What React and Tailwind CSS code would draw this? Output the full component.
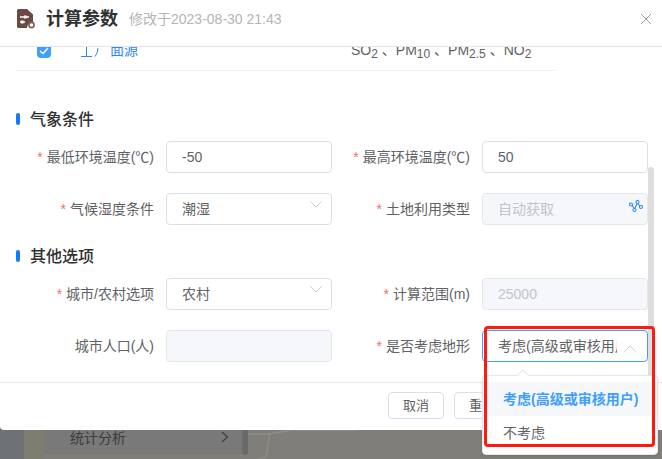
import React from "react";

function Label({ children, required }) {
  return (
    <label className="flex-1 pr-3 text-right text-sm leading-8 text-[#606266] whitespace-nowrap">
      {required && <span className="mr-1 text-[#f56c6c]">*</span>}
      {children}
    </label>
  );
}

function Chevron({ up }) {
  return (
    <svg width="12" height="7" viewBox="0 0 12 7" fill="none" stroke="#c8ccd4" strokeWidth="1">
      <path d={up ? "M0.5 6.5 L6 1 L11.5 6.5" : "M0.5 0.5 L6 6 L11.5 0.5"} />
    </svg>
  );
}

function Control({ value, disabled, select, children }) {
  return (
    <div
      className={
        "relative h-8 w-[166px] shrink-0 rounded border px-[15px] text-sm leading-[30px] " +
        (disabled
          ? "border-[#e4e7ed] bg-[#f5f7fa] text-[#c0c4cc]"
          : "border-[#dcdfe6] bg-white text-[#606266]")
      }
    >
      {value}
      {select && (
        <span className="absolute right-[9px] top-[7px] flex">
          <Chevron />
        </span>
      )}
      {children}
    </div>
  );
}

function Section({ children, className }) {
  return (
    <div className={"flex h-6 items-center pl-4 " + className}>
      <span className="h-3 w-1 rounded-sm bg-[#1677ff]" />
      <span className="ml-[10px] pt-[2px] text-base font-medium leading-6 text-[#303133]">{children}</span>
    </div>
  );
}

function Row({ left, right, className = "" }) {
  return (
    <div className={"flex h-8 " + className}>
      <div className="flex w-[332px]">{left}</div>
      <div className="flex w-[316px]">{right}</div>
    </div>
  );
}

function Formula() {
  const Sub = ({ children }) => <sub className="text-[12px]">{children}</sub>;
  return (
    <span className="whitespace-pre text-sm leading-5 text-[#606266]">
      SO<Sub>2</Sub> 、PM<Sub>10</Sub> 、PM<Sub>2.5</Sub> 、NO<Sub>2</Sub>
    </span>
  );
}

function Button({ children, className = "" }) {
  return (
    <button className={"h-[27px] rounded border border-[#dcdfe6] bg-white text-[13px] text-[#606266] " + className}>
      {children}
    </button>
  );
}

export default function App() {
  return (
    <div
      className="relative flex h-[459px] w-[662px] flex-col overflow-hidden bg-[#7f7e78]"
      style={{ fontFamily: '"Liberation Sans","Noto Sans CJK SC",sans-serif' }}
    >
      <div className="absolute inset-x-0 bottom-0 flex h-[40px]">
        <div className="w-6 bg-[#6e7274]" />
        <div className="w-5 bg-[#7f7d72]" />
        <div className="relative h-[35px] w-[198px] bg-[#797979] pl-[26px] pt-[7px]">
          <span className="text-sm leading-5 text-[#3c3c3c]">统计分析</span>
          <svg className="absolute left-[177px] top-[12px]" width="8" height="12" viewBox="0 0 8 12" fill="none" stroke="#3f3f3f" strokeWidth="1.2">
            <path d="M1 1 L6.5 6 L1 11" />
          </svg>
        </div>
        <div className="h-[36px] w-[6px] rounded-b bg-[#6a6a6a]" />
        <svg className="flex-1" viewBox="0 0 414 40" height="40" fill="none" stroke="#8f8d85" strokeWidth="1.5">
          <path d="M0 15 H20 L45 11 H110 M22 14 L18 38 L10 40" />
        </svg>
      </div>

      <div className="relative flex h-[430px] shrink-0 flex-col rounded-bl bg-white">
        <header className="flex h-[47px] shrink-0 items-center border-b border-[#e4e4e4] pb-[8px]">
          <svg className="ml-[17px]" width="19" height="20" viewBox="0 0 19 20">
            <path d="M1.5 0 H10 L16 5.5 V14 A5 5 0 0 0 10 19 H1.5 A1.5 1.5 0 0 1 0 17.5 V1.5 A1.5 1.5 0 0 1 1.5 0 Z" fill="#6b4a44" />
            <path d="M3 8 H12 M3 13 H8" stroke="#fff" strokeWidth="1.4" />
            <rect x="7" y="6.5" width="2.5" height="3" fill="#fff" />
            <rect x="4" y="11.5" width="2.5" height="3" fill="#fff" />
            <circle cx="14.5" cy="16" r="2.6" fill="none" stroke="#7b5f5a" strokeWidth="1.6" />
          </svg>
          <h1 className="ml-[10px] text-lg font-bold text-[#303133]">计算参数</h1>
          <span className="ml-[11px] text-sm text-[#b4b4b4]">修改于2023-08-30 21:43</span>
          <svg className="ml-auto mr-[11px]" width="10" height="10" viewBox="0 0 10 10" stroke="#909399" strokeWidth="0.9">
            <path d="M0 0 L10 10 M10 0 L0 10" />
          </svg>
        </header>

        <main className="flex-1 overflow-hidden">
          <div className="ml-4 flex h-6 w-[540px] items-start border-b border-[#f0f0f0]">
            <span className="ml-[21px] -mt-[3px] flex h-[14px] w-[14px] items-center justify-center rounded-sm bg-[#409eff]">
              <svg width="10" height="8" viewBox="0 0 10 8" fill="none" stroke="#fff" strokeWidth="1.3">
                <path d="M1 4 L4 6.5 L9 1" />
              </svg>
            </span>
            <svg className="ml-[30px] -mt-[7px]" width="19" height="17" viewBox="0 0 19 17" fill="none" stroke="#2f86f6" strokeWidth="1">
              <path d="M0 16.5 H11 M5.5 0 V16.5 M17 8 Q16.5 14 14 16.5" />
            </svg>
            <span className="ml-[10px] -mt-[7px] text-sm leading-5 text-[#2f86f6]">面源</span>
            <span className="ml-[213px] -mt-[7px] flex">
              <Formula />
            </span>
          </div>

          <Section className="mt-9">气象条件</Section>
          <Row
            className="mt-[10px]"
            left={<><Label required>最低环境温度(℃)</Label><Control value="-50" /></>}
            right={<><Label required>最高环境温度(℃)</Label><Control value="50" /></>}
          />
          <Row
            className="mt-5"
            left={<><Label required>气候湿度条件</Label><Control value="潮湿" select /></>}
            right={
              <>
                <Label required>土地利用类型</Label>
                <Control value="自动获取" disabled>
                  <svg className="absolute right-[4px] top-[6px]" width="14" height="13" viewBox="0 0 14 13" fill="none" stroke="#2f86f6" strokeWidth="1.1">
                    <path d="M2.5 4.5 L5.5 9 L8.5 3 L11.5 7" />
                    <circle cx="2" cy="4.5" r="1.5" fill="#fff" />
                    <circle cx="5.5" cy="10" r="1.5" fill="#fff" />
                    <circle cx="8.5" cy="2" r="1.5" fill="#fff" />
                    <circle cx="12" cy="7" r="1.5" fill="#fff" />
                  </svg>
                </Control>
              </>
            }
          />
          <Section className="mt-[19px]">其他选项</Section>
          <Row
            className="mt-[10px]"
            left={<><Label required>城市/农村选项</Label><Control value="农村" select /></>}
            right={<><Label required>计算范围(m)</Label><Control value="25000" disabled /></>}
          />
          <Row
            className="mt-5"
            left={<><Label>城市人口(人)</Label><Control disabled /></>}
            right={
              <>
                <Label required>是否考虑地形</Label>
                <div className="relative h-8 w-[166px] shrink-0 overflow-hidden rounded border border-[#409eff] bg-white pl-[15px] pr-[30px] text-sm leading-[30px] text-[#606266]">
                  <div className="overflow-hidden whitespace-nowrap">考虑(高级或审核用户)</div>
                  <span className="absolute right-[11px] top-[14px] flex">
                    <Chevron up />
                  </span>
                </div>
              </>
            }
          />
        </main>

        <footer className="flex h-[48px] shrink-0 gap-[10px] border-t border-[#e6e6e6] pl-[388px] pt-[9px]">
          <Button className="w-[56px]">取消</Button>
          <Button className="w-[56px]">重置</Button>
        </footer>
      </div>

      <div className="absolute left-[648px] top-[167px] h-[210px] w-[6px] rounded-t bg-[#dedede]" />

      <div className="absolute left-[482px] top-[375px] h-[80px] w-[176px] rounded border border-[#e4e7ed] bg-white py-[6px] shadow-sm">
        <span className="absolute -top-[5px] left-[36px] h-2 w-2 rotate-45 border-l border-t border-[#e4e7ed] bg-white" />
        <div className="h-[34px] bg-[#f5f7fa] pl-5 text-sm font-bold leading-[34px] text-[#409eff] whitespace-nowrap">
          考虑(高级或审核用户)
        </div>
        <div className="h-[34px] pl-5 text-sm leading-[34px] text-[#606266]">不考虑</div>
      </div>

      <div className="absolute left-[484px] top-[326px] h-[121px] w-[171px] rounded-sm border-[3px] border-[#ff1a0f]" />
    </div>
  );
}
